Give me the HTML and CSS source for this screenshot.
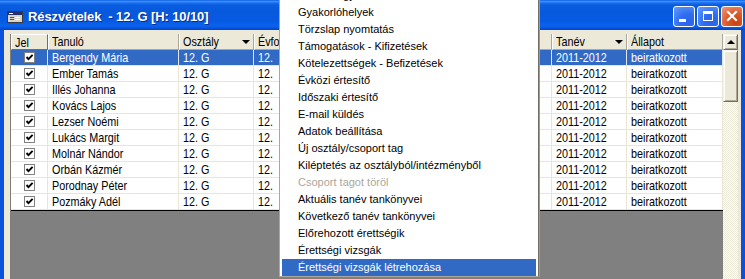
FILE: index.html
```html
<!DOCTYPE html>
<html lang="hu">
<head>
<meta charset="utf-8">
<title>Részvételek</title>
<link rel="stylesheet" href="styles.css">
</head>
<body>
<div class="window">
  <div class="titlebar">
    <svg class="title-icon" width="16" height="12" viewBox="0 0 16 12">
      <rect x="0.5" y="0.5" width="15" height="11" fill="#d8d4cc" stroke="#3a3a3a"/>
      <rect x="1" y="1" width="14" height="3" fill="#24306e"/>
      <rect x="2" y="2" width="4" height="1" fill="#fff"/>
      <rect x="3" y="6" width="4" height="1" fill="#555"/>
      <rect x="8" y="6" width="5" height="1" fill="#fff"/>
      <rect x="3" y="8" width="4" height="1" fill="#555"/>
      <rect x="8" y="8" width="5" height="1" fill="#fff"/>
    </svg>
    <span class="title">Részvételek&nbsp; - 12. G [H: 10/10]</span>
    <div class="tb-btns">
      <div class="tb-btn blue"><span class="g-min"></span></div>
      <div class="tb-btn blue"><span class="g-max"></span></div>
      <div class="tb-btn red">
        <svg width="19" height="19" viewBox="0 0 19 19"><path d="M5 5 L13 13 M13 5 L5 13" stroke="#fff" stroke-width="2.2" stroke-linecap="square"/></svg>
      </div>
    </div>
  </div>
  <div class="frame">
    <div class="gridwrap">
      <div class="grid">
        <div class="hrow">
          <div class="hcell jel"><span class="t">Jel</span></div>
          <div class="hcell"><span class="t">Tanuló</span></div>
          <div class="hcell drop"><span class="t">Osztály</span><span class="arrow"></span></div>
          <div class="hcell"><span class="t">Évfo</span></div>
          <div class="hcell drop"><span class="t">Tanév</span><span class="arrow"></span></div>
          <div class="hcell"><span class="t">Állapot</span></div>
        </div>
        <div class="row sel"><div class="cell ck"><span class="cb"><svg width="9" height="9" viewBox="0 0 9 9"><path d="M1.5 4 L3.5 6.2 L7.6 1.8" fill="none" stroke="#000" stroke-width="1.9"/></svg></span></div><div class="cell"><span class="t">Bergendy Mária</span></div><div class="cell"><span class="t">12. G</span></div><div class="cell"><span class="t">12.</span></div><div class="cell"><span class="t">2011-2012</span></div><div class="cell"><span class="t">beiratkozott</span></div></div>
        <div class="row"><div class="cell ck"><span class="cb"><svg width="9" height="9" viewBox="0 0 9 9"><path d="M1.5 4 L3.5 6.2 L7.6 1.8" fill="none" stroke="#000" stroke-width="1.9"/></svg></span></div><div class="cell"><span class="t">Ember Tamás</span></div><div class="cell"><span class="t">12. G</span></div><div class="cell"><span class="t">12.</span></div><div class="cell"><span class="t">2011-2012</span></div><div class="cell"><span class="t">beiratkozott</span></div></div>
        <div class="row"><div class="cell ck"><span class="cb"><svg width="9" height="9" viewBox="0 0 9 9"><path d="M1.5 4 L3.5 6.2 L7.6 1.8" fill="none" stroke="#000" stroke-width="1.9"/></svg></span></div><div class="cell"><span class="t">Illés Johanna</span></div><div class="cell"><span class="t">12. G</span></div><div class="cell"><span class="t">12.</span></div><div class="cell"><span class="t">2011-2012</span></div><div class="cell"><span class="t">beiratkozott</span></div></div>
        <div class="row"><div class="cell ck"><span class="cb"><svg width="9" height="9" viewBox="0 0 9 9"><path d="M1.5 4 L3.5 6.2 L7.6 1.8" fill="none" stroke="#000" stroke-width="1.9"/></svg></span></div><div class="cell"><span class="t">Kovács Lajos</span></div><div class="cell"><span class="t">12. G</span></div><div class="cell"><span class="t">12.</span></div><div class="cell"><span class="t">2011-2012</span></div><div class="cell"><span class="t">beiratkozott</span></div></div>
        <div class="row"><div class="cell ck"><span class="cb"><svg width="9" height="9" viewBox="0 0 9 9"><path d="M1.5 4 L3.5 6.2 L7.6 1.8" fill="none" stroke="#000" stroke-width="1.9"/></svg></span></div><div class="cell"><span class="t">Lezser Noémi</span></div><div class="cell"><span class="t">12. G</span></div><div class="cell"><span class="t">12.</span></div><div class="cell"><span class="t">2011-2012</span></div><div class="cell"><span class="t">beiratkozott</span></div></div>
        <div class="row"><div class="cell ck"><span class="cb"><svg width="9" height="9" viewBox="0 0 9 9"><path d="M1.5 4 L3.5 6.2 L7.6 1.8" fill="none" stroke="#000" stroke-width="1.9"/></svg></span></div><div class="cell"><span class="t">Lukács Margit</span></div><div class="cell"><span class="t">12. G</span></div><div class="cell"><span class="t">12.</span></div><div class="cell"><span class="t">2011-2012</span></div><div class="cell"><span class="t">beiratkozott</span></div></div>
        <div class="row"><div class="cell ck"><span class="cb"><svg width="9" height="9" viewBox="0 0 9 9"><path d="M1.5 4 L3.5 6.2 L7.6 1.8" fill="none" stroke="#000" stroke-width="1.9"/></svg></span></div><div class="cell"><span class="t">Molnár Nándor</span></div><div class="cell"><span class="t">12. G</span></div><div class="cell"><span class="t">12.</span></div><div class="cell"><span class="t">2011-2012</span></div><div class="cell"><span class="t">beiratkozott</span></div></div>
        <div class="row"><div class="cell ck"><span class="cb"><svg width="9" height="9" viewBox="0 0 9 9"><path d="M1.5 4 L3.5 6.2 L7.6 1.8" fill="none" stroke="#000" stroke-width="1.9"/></svg></span></div><div class="cell"><span class="t">Orbán Kázmér</span></div><div class="cell"><span class="t">12. G</span></div><div class="cell"><span class="t">12.</span></div><div class="cell"><span class="t">2011-2012</span></div><div class="cell"><span class="t">beiratkozott</span></div></div>
        <div class="row"><div class="cell ck"><span class="cb"><svg width="9" height="9" viewBox="0 0 9 9"><path d="M1.5 4 L3.5 6.2 L7.6 1.8" fill="none" stroke="#000" stroke-width="1.9"/></svg></span></div><div class="cell"><span class="t">Porodnay Péter</span></div><div class="cell"><span class="t">12. G</span></div><div class="cell"><span class="t">12.</span></div><div class="cell"><span class="t">2011-2012</span></div><div class="cell"><span class="t">beiratkozott</span></div></div>
        <div class="row"><div class="cell ck"><span class="cb"><svg width="9" height="9" viewBox="0 0 9 9"><path d="M1.5 4 L3.5 6.2 L7.6 1.8" fill="none" stroke="#000" stroke-width="1.9"/></svg></span></div><div class="cell"><span class="t">Pozmáky Adél</span></div><div class="cell"><span class="t">12. G</span></div><div class="cell"><span class="t">12.</span></div><div class="cell"><span class="t">2011-2012</span></div><div class="cell"><span class="t">beiratkozott</span></div></div>
        <div class="empty"></div>
      </div>
      <div class="scrollbar">
        <div class="sb-btn"><span class="up"></span></div>
        <div class="sb-thumb"></div>
      </div>
    </div>
  </div>
</div>

<div class="menu">
  <div class="mi">Szakmai gyakorlatok</div>
  <div class="mi">Gyakorlóhelyek</div>
  <div class="mi">Törzslap nyomtatás</div>
  <div class="mi">Támogatások - Kifizetések</div>
  <div class="mi">Kötelezettségek - Befizetések</div>
  <div class="mi">Évközi értesítő</div>
  <div class="mi">Időszaki értesítő</div>
  <div class="mi">E-mail küldés</div>
  <div class="mi">Adatok beállítása</div>
  <div class="mi">Új osztály/csoport tag</div>
  <div class="mi">Kiléptetés az osztályból/intézményből</div>
  <div class="mi dis">Csoport tagot töröl</div>
  <div class="mi">Aktuális tanév tankönyvei</div>
  <div class="mi">Következő tanév tankönyvei</div>
  <div class="mi">Előrehozott érettségik</div>
  <div class="mi">Érettségi vizsgák</div>
  <div class="mi hl">Érettségi vizsgák létrehozása</div>
</div>
</body>
</html>
```

FILE: styles.css
```css
html, body {
  margin: 0;
  padding: 0;
  width: 745px;
  height: 279px;
  overflow: hidden;
  background: #ece9d8;
}

.window {
  width: 745px;
  height: 279px;
  display: flex;
  flex-direction: column;
}

.titlebar {
  height: 30px;
  flex: none;
  box-sizing: border-box;
  display: flex;
  align-items: center;
  padding: 3px 2px 0 7px;
  background: linear-gradient(to bottom, #0a5fe8 0%, #3d8ef8 5%, #1f74f0 9%, #0a5de0 16%, #0758dc 40%, #065ae2 70%, #0a62ee 86%, #0656e0 93%, #0342c0 100%);
}

.title-icon {
  flex: none;
  margin-right: 5px;
}

.title {
  font: bold 13px "Liberation Sans", Arial, sans-serif;
  color: #fff;
  text-shadow: 1px 1px 0 #0b2a8a;
  white-space: nowrap;
  letter-spacing: -0.1px;
}

.tb-btns {
  margin-left: auto;
  display: flex;
  gap: 2px;
}

.tb-btn {
  width: 22px;
  height: 21px;
  box-sizing: border-box;
  border: 1px solid #fff;
  border-radius: 3px;
  position: relative;
  display: flex;
  align-items: center;
  justify-content: center;
}

.tb-btn.blue {
  background: radial-gradient(circle at 70% 80%, #2a64e8 0%, #2f6cf0 40%, #5b95fb 90%);
}

.tb-btn.red {
  background: radial-gradient(circle at 70% 80%, #c9400f 0%, #dc5a2c 45%, #f29a7a 100%);
}

.g-min {
  position: absolute;
  left: 5px;
  bottom: 4px;
  width: 7px;
  height: 3px;
  background: #fff;
}

.g-max {
  position: absolute;
  left: 5px;
  top: 4px;
  width: 10px;
  height: 10px;
  box-sizing: border-box;
  border: 1px solid #fff;
  border-top-width: 3px;
}

.frame {
  flex: 1;
  min-height: 0;
  display: flex;
  border-left: 4px solid #0a52dc;
  border-right: 4px solid #0a52dc;
  background: #ece9d8;
  padding: 4px 3px 0 6px;
}

.gridwrap {
  flex: 1;
  display: flex;
  border-left: 1px solid #7f7f78;
  min-height: 0;
}

.grid {
  width: 712px;
  display: flex;
  flex-direction: column;
  background: #808080;
}

.hrow, .row {
  display: grid;
  grid-template-columns: 37px 131px 75px 298px 75px 96px;
  flex: none;
}

.hrow {
  height: 16px;
  background: #ece9d8;
}

.t {
  display: inline-block;
  transform: scaleX(0.83);
  transform-origin: 0 50%;
}

.hcell {
  box-sizing: border-box;
  border-left: 1px solid #fff;
  border-right: 1px solid #aca899;
  border-bottom: 1px solid #aca899;
  padding-left: 3px;
  font: 13px/15px "Liberation Sans", Arial, sans-serif;
  color: #000;
  white-space: nowrap;
  overflow: hidden;
  display: flex;
  align-items: center;
}

.hcell.jel {
  border: 1px solid #716f64;
  border-left-color: #fff;
  border-top-color: #fff;
}

.hcell.drop {
  justify-content: space-between;
  padding-right: 3px;
}

.arrow {
  width: 0;
  height: 0;
  border-left: 4px solid transparent;
  border-right: 4px solid transparent;
  border-top: 4px solid #000;
}

.row {
  height: 16px;
  background: #fff;
  color: #000;
}

.row.sel {
  background: #316ac5;
  color: #fff;
}

.cell {
  box-sizing: border-box;
  border-right: 1px solid #ebe6d3;
  border-bottom: 1px solid #ebe6d3;
  padding-left: 4px;
  font: 13px/15px "Liberation Sans", Arial, sans-serif;
  white-space: nowrap;
  overflow: hidden;
}

.row.sel .cell {
  border-color: #dfe6f2;
}

.cell.ck {
  display: flex;
  align-items: center;
  justify-content: center;
  padding-left: 0;
}

.cb {
  width: 11px;
  height: 11px;
  box-sizing: border-box;
  border: 1px solid #808080;
  background: #fff;
  display: flex;
  align-items: center;
  justify-content: center;
}

.empty {
  flex: 1;
  background: #808080;
  border-top: 1px solid #000;
}

.scrollbar {
  width: 15px;
  display: flex;
  flex-direction: column;
  background: repeating-conic-gradient(#ece9d8 0 25%, #ffffff 0 50%) 0 0 / 2px 2px;
}

.sb-btn, .sb-thumb {
  box-sizing: border-box;
  background: #ece9d8;
  border: 1px solid;
  border-color: #f4f3ee #716f64 #716f64 #f4f3ee;
  box-shadow: inset 1px 1px 0 #fff, inset -1px -1px 0 #aca899;
}

.sb-btn {
  height: 16px;
  display: flex;
  align-items: center;
  justify-content: center;
}

.up {
  width: 0;
  height: 0;
  border-left: 4px solid transparent;
  border-right: 4px solid transparent;
  border-bottom: 4px solid #000;
}

.sb-thumb {
  height: 52px;
}

.menu {
  position: absolute;
  left: 279px;
  top: -14px;
  width: 260px;
  box-sizing: border-box;
  border: 1px solid #aca899;
  border-right-color: #716f64;
  background: #fff;
  padding: 0 2px;
  box-shadow: 1px 0 0 #9a9a9a;
  font: 11px "Liberation Sans", Arial, sans-serif;
}

.mi {
  height: 17px;
  line-height: 17px;
  padding-left: 16px;
  white-space: nowrap;
  color: #000;
}

.mi.dis {
  color: #aca899;
}

.mi.hl {
  background: #316ac5;
  color: #fff;
}
```
